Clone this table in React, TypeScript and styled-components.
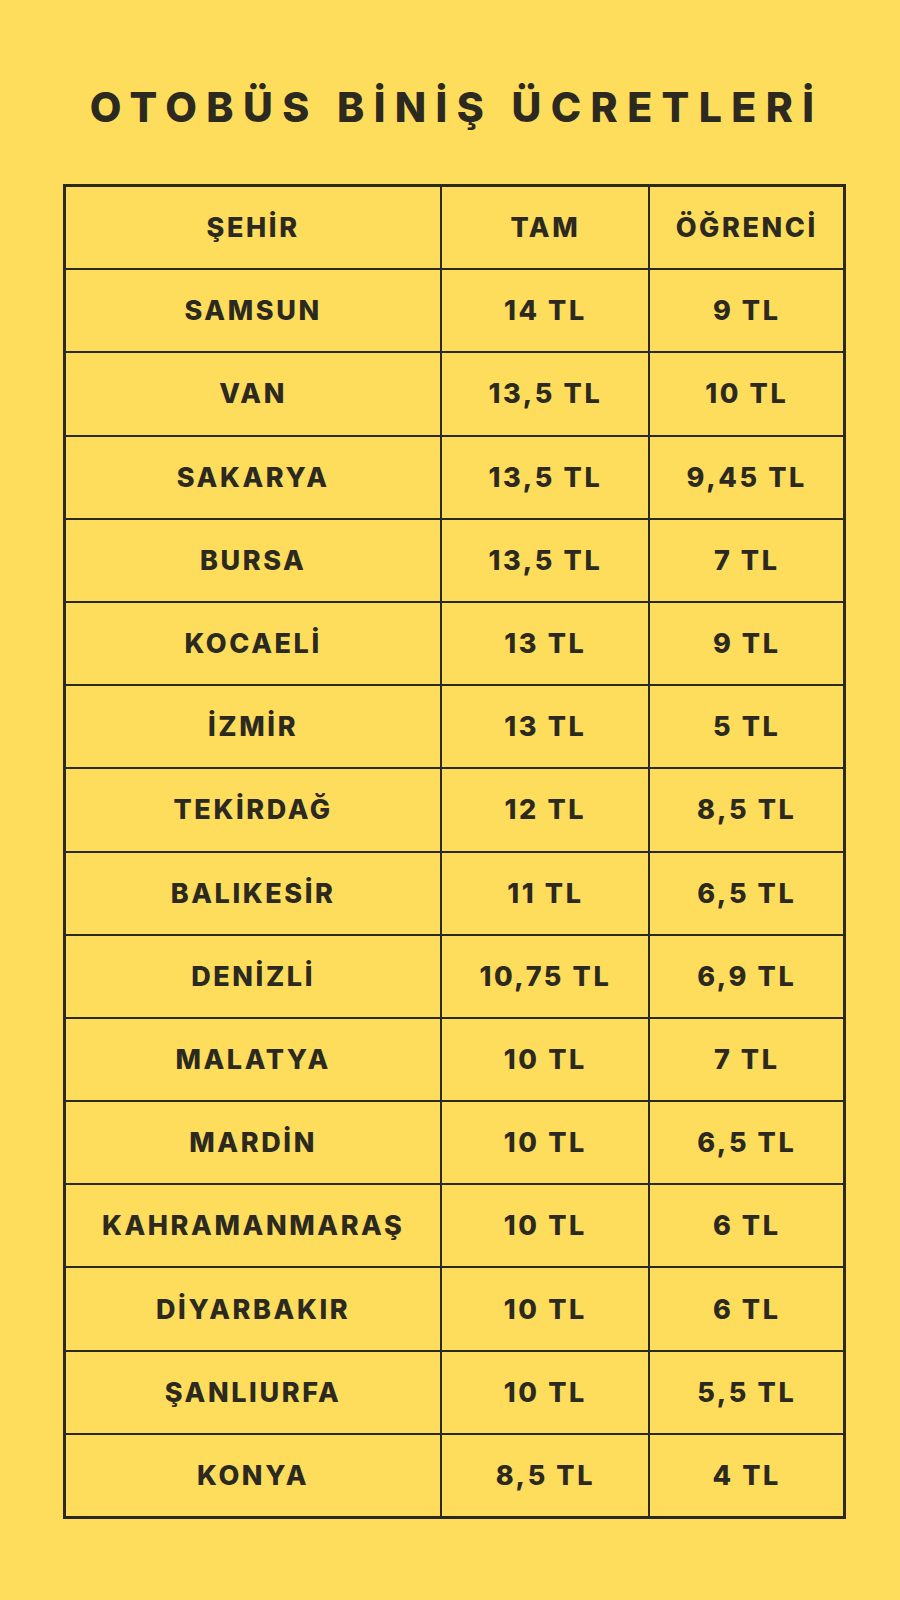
import React from "react";
import styled, { createGlobalStyle } from "styled-components";

const Global = createGlobalStyle`
  html, body { margin: 0; padding: 0; background: #FDDD5B; }
  body { font-family: Inter, "Noto Sans", sans-serif; color: #2c2a20; }
`;

const Page = styled.div`
  width: 900px;
  height: 1600px;
  box-sizing: border-box;
  padding-top: 87px;
  display: flex;
  flex-direction: column;
  align-items: center;
  background: #FDDD5B;
`;

const Title = styled.h1`
  margin: 0 0 0 13px;
  font-size: 41px;
  line-height: 41px;
  font-weight: 800;
  letter-spacing: 9.4px;
  color: #2c2a20;
  white-space: nowrap;
`;

const Table = styled.table`
  margin-top: 56px;
  margin-left: 9px;
  width: 783px;
  border-collapse: collapse;
  border: 3px solid #2c2a20;
  table-layout: fixed;
`;

const Col = styled.col<{ $pct: number }>`
  width: ${(p) => p.$pct}%;
`;

const Cell = styled.td`
  height: 81.2px;
  padding: 0;
  border: 2.5px solid #2c2a20;
  text-align: center;
  vertical-align: middle;
  font-size: 27px;
  font-weight: 800;
  letter-spacing: 2.6px;
  color: #2c2a20;
  white-space: nowrap;
`;

const rows: [string, string, string][] = [
  ["ŞEHİR", "TAM", "ÖĞRENCİ"],
  ["SAMSUN", "14 TL", "9 TL"],
  ["VAN", "13,5 TL", "10 TL"],
  ["SAKARYA", "13,5 TL", "9,45 TL"],
  ["BURSA", "13,5 TL", "7 TL"],
  ["KOCAELİ", "13 TL", "9 TL"],
  ["İZMİR", "13 TL", "5 TL"],
  ["TEKİRDAĞ", "12 TL", "8,5 TL"],
  ["BALIKESİR", "11 TL", "6,5 TL"],
  ["DENİZLİ", "10,75 TL", "6,9 TL"],
  ["MALATYA", "10 TL", "7 TL"],
  ["MARDİN", "10 TL", "6,5 TL"],
  ["KAHRAMANMARAŞ", "10 TL", "6 TL"],
  ["DİYARBAKIR", "10 TL", "6 TL"],
  ["ŞANLIURFA", "10 TL", "5,5 TL"],
  ["KONYA", "8,5 TL", "4 TL"],
];

export default function App() {
  return (
    <>
      <Global />
      <Page>
        <Title>OTOBÜS BİNİŞ ÜCRETLERİ</Title>
        <Table>
          <colgroup>
            <Col $pct={48.3} />
            <Col $pct={26.7} />
            <Col $pct={25} />
          </colgroup>
          <tbody>
            {rows.map((r) => (
              <tr key={r[0]}>
                <Cell>{r[0]}</Cell>
                <Cell>{r[1]}</Cell>
                <Cell>{r[2]}</Cell>
              </tr>
            ))}
          </tbody>
        </Table>
      </Page>
    </>
  );
}
